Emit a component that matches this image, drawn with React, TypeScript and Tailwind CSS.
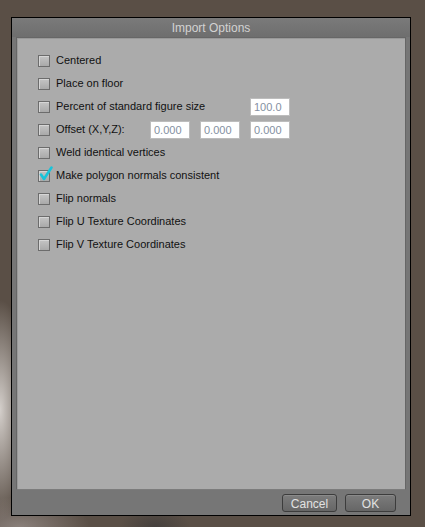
import React, { useState } from 'react';

const rows = [
  { label: 'Centered', checked: false },
  { label: 'Place on floor', checked: false },
  { label: 'Percent of standard figure size', checked: false, fields: ['100.0'] },
  { label: 'Offset (X,Y,Z):', checked: false, fields: ['0.000', '0.000', '0.000'] },
  { label: 'Weld identical vertices', checked: false },
  { label: 'Make polygon normals consistent', checked: true },
  { label: 'Flip normals', checked: false },
  { label: 'Flip U Texture Coordinates', checked: false },
  { label: 'Flip V Texture Coordinates', checked: false },
];

const Check: React.FC<{ checked: boolean; onClick: () => void }> = ({ checked, onClick }) => (
  <button
    onClick={onClick}
    className="relative w-[12px] h-[12px] shrink-0 border border-[#6c6c6c] bg-[linear-gradient(#c4c4c4,#a9a9a9)] shadow-[inset_1px_1px_0_#d6d6d6]"
  >
    {checked && (
      <svg className="absolute -top-[5px] left-[0px]" width="14" height="15" viewBox="0 0 14 15">
        <path d="M2 8.5 L5 13 L12.5 1.5" fill="none" stroke="#18c4da" strokeWidth="2.6" strokeLinecap="round" strokeLinejoin="round" />
      </svg>
    )}
  </button>
);

const App: React.FC = () => {
  const [state, setState] = useState(rows.map((r) => r.checked));

  return (
    <div className="w-[425px] h-[527px] bg-[#5a4f46] bg-[radial-gradient(ellipse_30px_110px_at_0px_410px,#d4cfcb,transparent),radial-gradient(ellipse_70px_30px_at_20px_527px,#8a807b,transparent),radial-gradient(ellipse_35px_20px_at_155px_527px,#45403d,transparent)] pt-[17px] pl-[11px] font-['Liberation_Sans',Arial,sans-serif]">
      <div className="w-[400px] h-[499px] border border-black bg-[#767676] flex flex-col">
        <div className="h-[19px] bg-[linear-gradient(#7a7a7a,#6e6e6e)] text-[#d2d2d2] text-[12px] flex items-center justify-center">
          Import Options
        </div>
        <div className="mx-[4px] h-[453px] bg-[#ababab] border border-[#666] border-b-[#7c7c7c] shadow-[inset_1px_1px_0_#999] pt-[11px] pl-[21px]">
          {rows.map((r, i) => (
            <div key={r.label} className="h-[23px] flex items-center">
              <Check
                checked={state[i]}
                onClick={() => setState(state.map((v, j) => (j === i ? !v : v)))}
              />
              <span className="ml-[6px] text-[11px] text-[#111]">{r.label}</span>
              {r.fields && (
                <div className="ml-auto mr-[115px] flex gap-[10px]">
                  {r.fields.map((f, k) => (
                    <input
                      key={k}
                      defaultValue={f}
                      className="w-[40px] h-[18px] bg-white border border-[#bdbdbd] px-[3px] text-[11px] text-[#8490a2] outline-none"
                    />
                  ))}
                </div>
              )}
            </div>
          ))}
        </div>
        <div className="flex-1 flex items-center justify-end gap-[8px] pr-[14px]">
          <button className="w-[55px] h-[18px] rounded-[3px] border border-[#3c3c3c] bg-[linear-gradient(#7c7c7c,#666)] text-[#e2e2e2] text-[12px] shadow-[inset_0_1px_0_#8a8a8a]">
            Cancel
          </button>
          <button className="w-[51px] h-[18px] rounded-[3px] border border-[#3c3c3c] bg-[linear-gradient(#7c7c7c,#666)] text-[#e2e2e2] text-[12px] shadow-[inset_0_1px_0_#8a8a8a]">
            OK
          </button>
        </div>
      </div>
    </div>
  );
};

export default App;
